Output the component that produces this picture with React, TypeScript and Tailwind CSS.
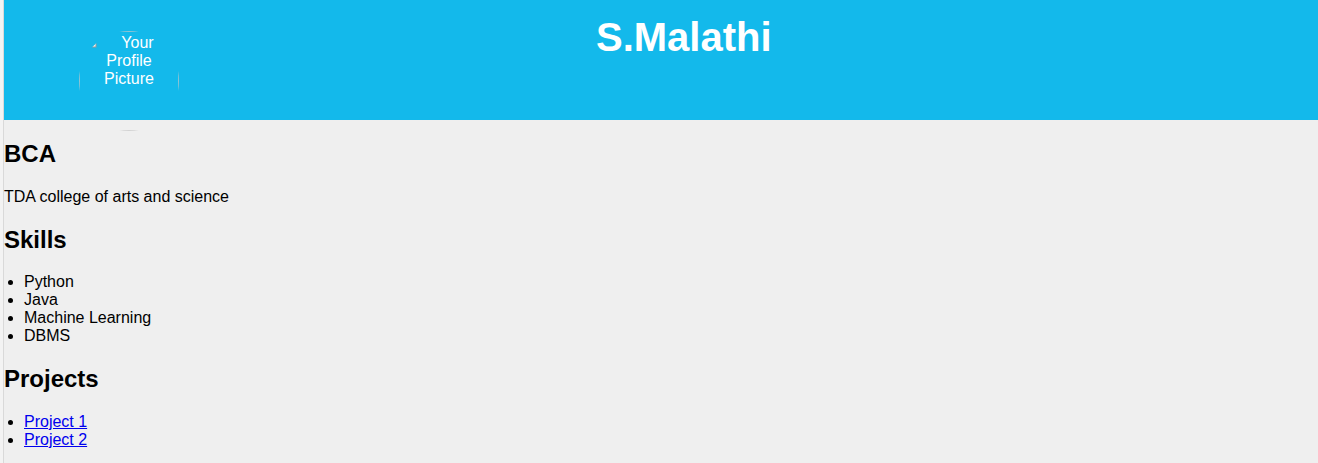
import React from 'react'

const skills = ['Python', 'Java', 'Machine Learning', 'DBMS']
const projects = ['Project 1', 'Project 2']

const App = () => {
  return (
    <div className="min-h-screen w-full bg-[#f3f3f3] pl-[3px] font-['Liberation_Sans',Arial,sans-serif] text-black">
      <div className="min-h-screen border-l border-[#d9d9d9] bg-[#efefef]">
        {/* header */}
        <header className="flex h-[120px] items-start bg-[#13b9eb]">
          {/* broken profile image look */}
          <div className="ml-[75px] mt-[31px] h-[100px] w-[100px] shrink-0 overflow-hidden rounded-full">
            <div className="h-full w-full border border-[#c8c8c8]/70 text-center text-[16px] leading-[18px] text-white">
              <svg className="float-left mt-[1px] ml-[1px] h-[16px] w-[16px]" viewBox="0 0 16 16">
                <rect x="1" y="2" width="14" height="12" fill="#f4f4f4" stroke="#9a9a9a" />
                <path d="M3 12 L7 7 L10 10 L12 8 L14 12 Z" fill="#5aa05a" />
              </svg>
              <span className="block pt-[2px]">Your Profile Picture</span>
            </div>
          </div>
          <h1 className="ml-[417px] mt-[14px] text-[40px] font-bold leading-[46px] text-white">S.Malathi</h1>
        </header>

        {/* content */}
        <section>
          <h2 className="my-[20px] text-[24px] font-bold leading-[27.6px]">BCA</h2>
          <p className="my-[16px] text-[16px] leading-[18px]">TDA college of arts and science</p>

          <h2 className="my-[20px] text-[24px] font-bold leading-[27.6px]">Skills</h2>
          <ul className="my-[16px] list-disc pl-[20px] text-[16px] leading-[18px]">
            {skills.map((s) => (
              <li key={s}>{s}</li>
            ))}
          </ul>

          <h2 className="my-[20px] text-[24px] font-bold leading-[27.6px]">Projects</h2>
          <ul className="mt-[16px] list-disc pl-[20px] pb-[12px] text-[16px] leading-[18px]">
            {projects.map((p) => (
              <li key={p}>
                <a href="#" className="text-[#0000ee] underline">{p}</a>
              </li>
            ))}
          </ul>
        </section>
      </div>
    </div>
  )
}

export default App
